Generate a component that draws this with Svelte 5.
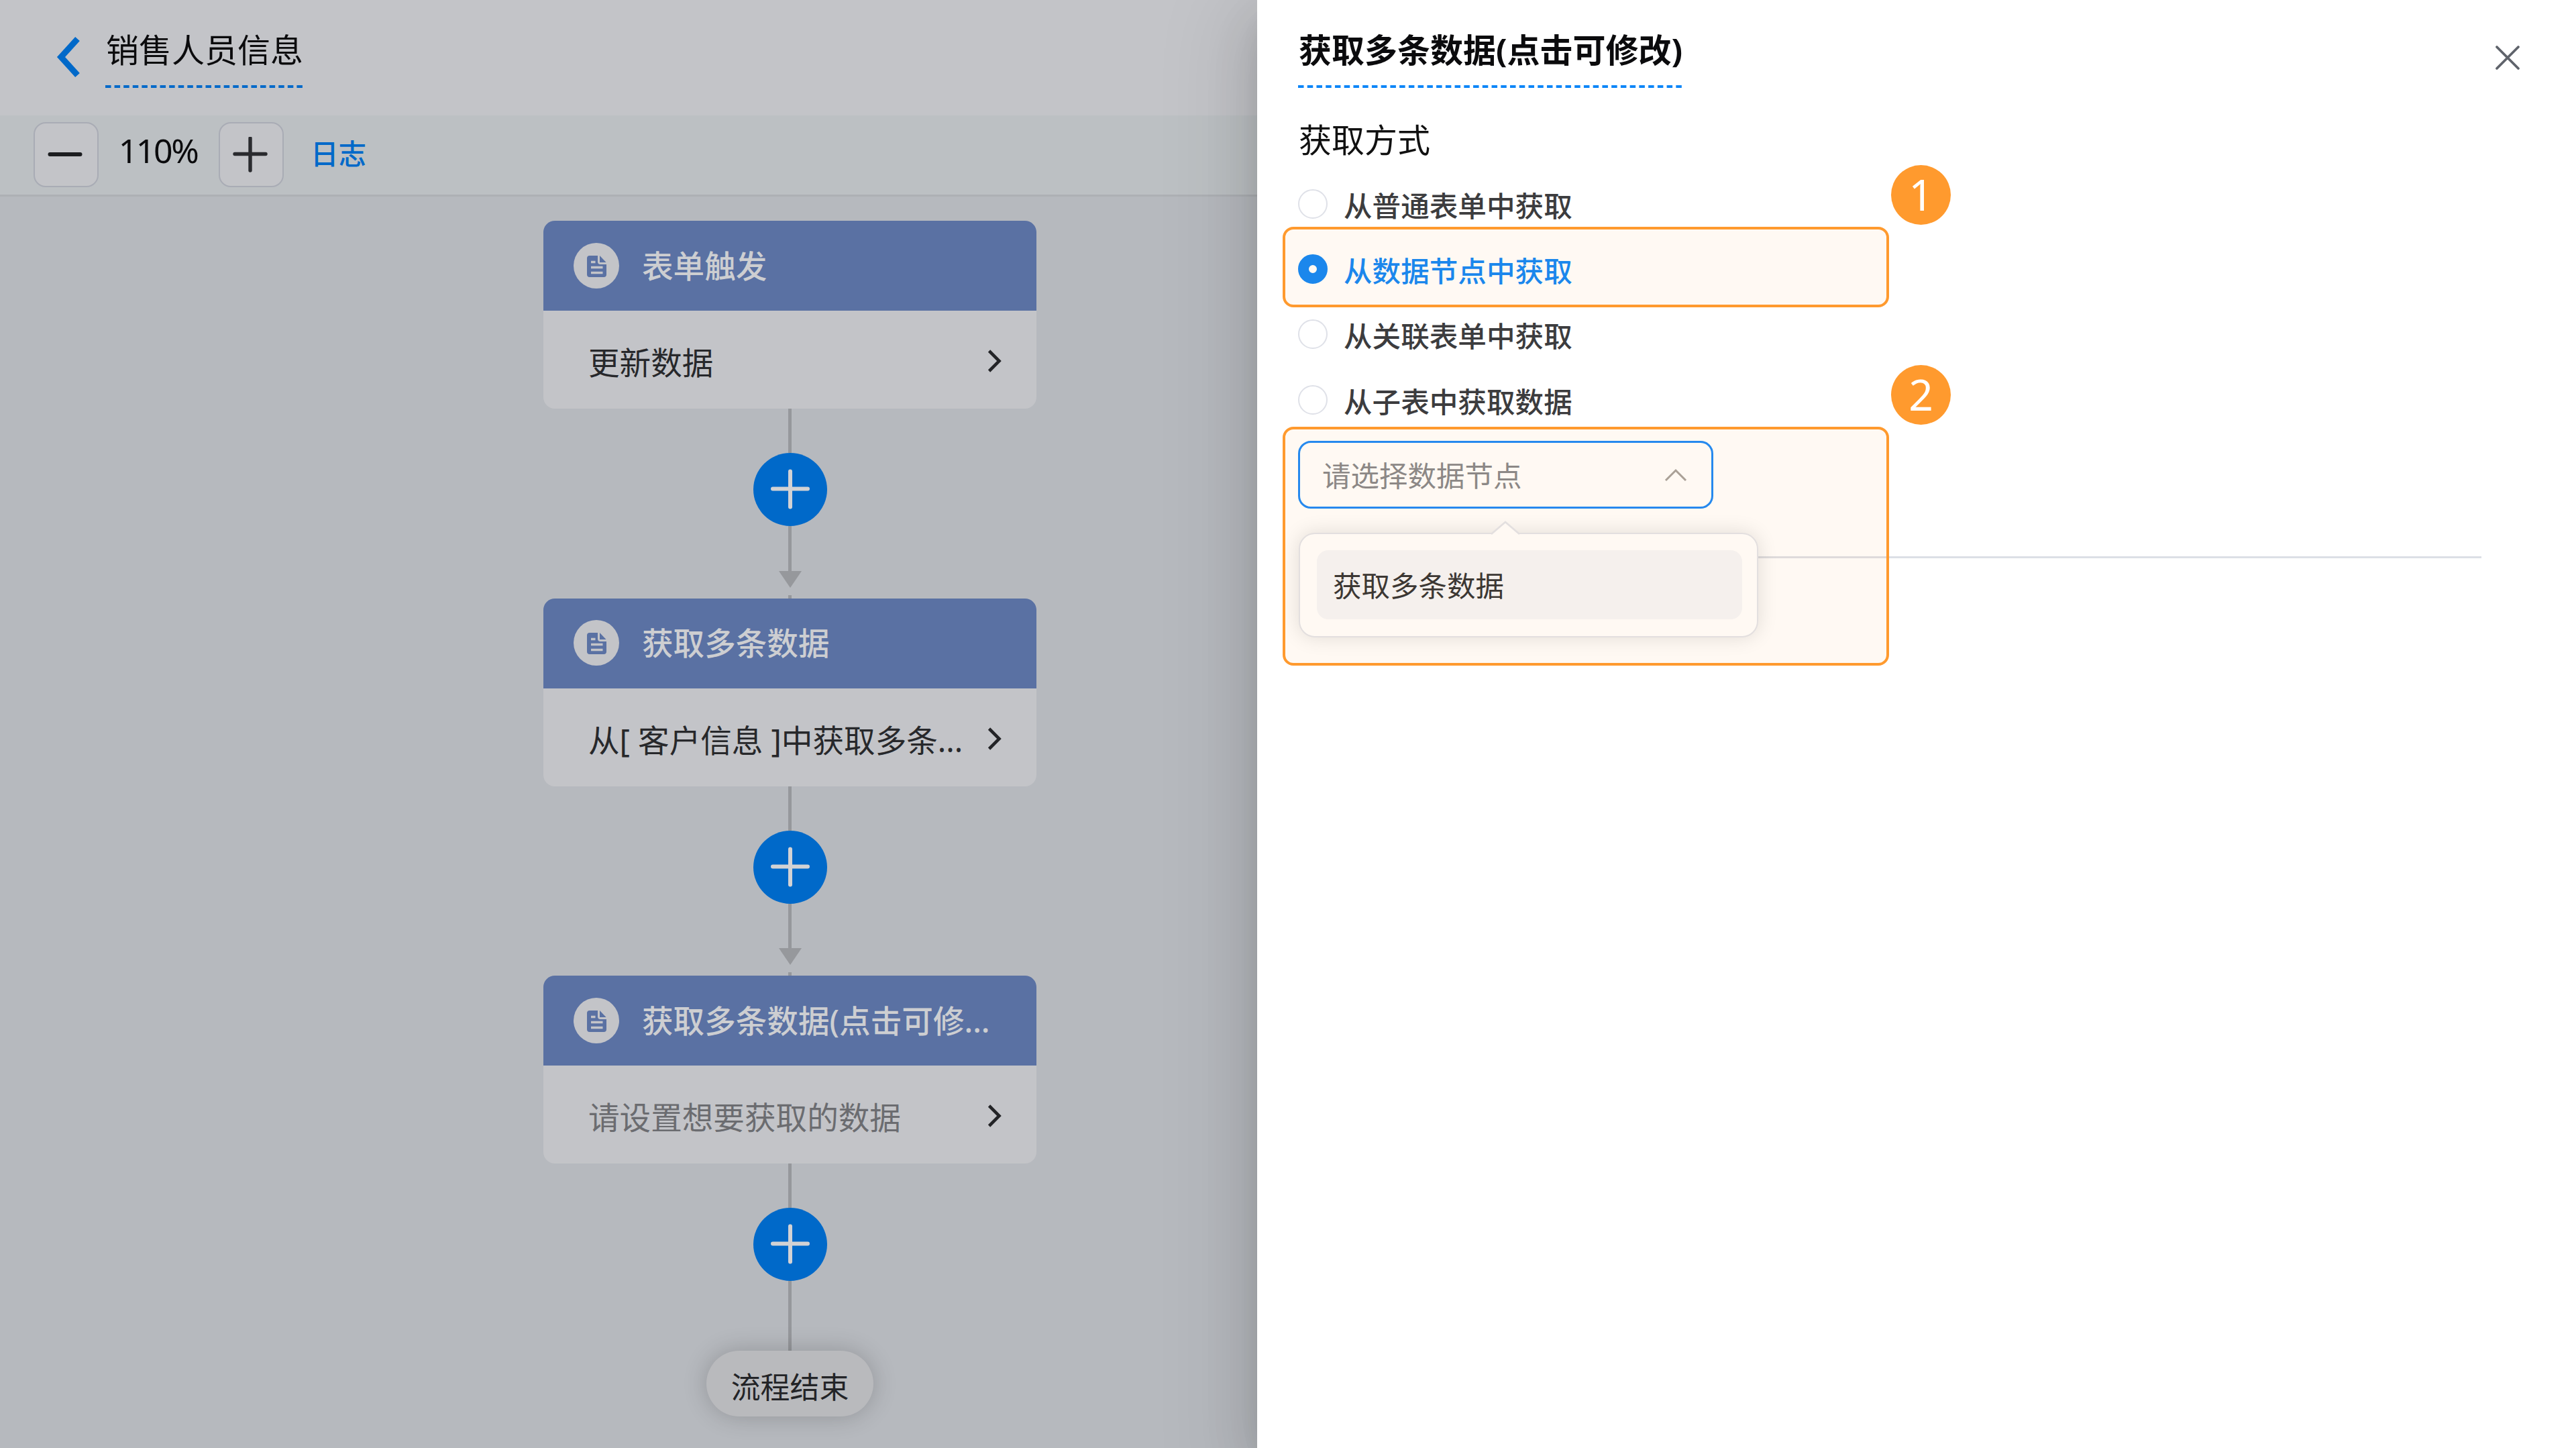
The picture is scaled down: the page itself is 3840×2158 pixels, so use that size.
<script>
  const nodes = [
    { title: '表单触发', body: '更新数据' },
    { title: '获取多条数据', body: '从[ 客户信息 ]中获取多条...' },
    { title: '获取多条数据(点击可修...', body: '请设置想要获取的数据', empty: true },
  ];

  const modes = ['从普通表单中获取', '从数据节点中获取', '从关联表单中获取', '从子表中获取数据'];

  let selected = $state(1);
  let zoom = $state(110);
</script>

<div class="page">
  <main class="flow">
    <header class="topbar">
      <svg class="back" viewBox="0 0 38 62">
        <path d="M31.5 4 L7 31 L31.5 58" fill="none" stroke="#0069c9" stroke-width="9" />
      </svg>
      <div class="name">
        <span>销售人员信息</span>
        <svg class="dashes" width="294" height="4">
          <line x1="0" y1="2" x2="294" y2="2" stroke="#0069c9" stroke-width="4" stroke-dasharray="8.5 5.09" />
        </svg>
      </div>
    </header>

    <div class="toolbar">
      <button class="zoom-btn" aria-label="缩小" onclick={() => (zoom -= 10)}>
        <svg width="54" height="54"><path d="M4.5 26 H49.5" stroke="#1c1d20" stroke-width="6" stroke-linecap="round" /></svg>
      </button>
      <span class="percent">{zoom}%</span>
      <button class="zoom-btn" aria-label="放大" onclick={() => (zoom += 10)}>
        <svg width="54" height="54"><path d="M4 25.5 H50 M27 2 V50" stroke="#2a2b2f" stroke-width="5.4" stroke-linecap="round" /></svg>
      </button>
      <span class="log">日志</span>
    </div>

    <div class="canvas">
      {#each nodes as node, i}
        <div class="node">
          <div class="node-head">
            <svg class="doc" viewBox="0 0 68 68">
              <circle cx="34" cy="34" r="34" fill="#c3c4c8" />
              <path d="M24 19 H36 V28 Q36 32 40 32 H49 V47 Q49 51 45 51 H24 Q20 51 20 47 V23 Q20 19 24 19 Z" fill="#5a71a3" />
              <path d="M39 19 L48.5 29 H39 Z" fill="#5a71a3" />
              <path d="M26 28.5 H32.5 M26 36.5 H43.5 M26 44.5 H43.5" stroke="#c3c4c8" stroke-width="3.6" />
            </svg>
            <span>{node.title}</span>
          </div>
          <div class="node-body" class:empty={node.empty}>
            <span>{node.body}</span>
            <svg class="arrow-right" width="24" height="38">
              <path d="M3.5 4 L18.5 19 L3.5 34" fill="none" stroke="#232427" stroke-width="4.6" />
            </svg>
          </div>
        </div>
        <div class="link" class:last={i === nodes.length - 1}>
          <i class="line top"></i>
          <button class="add" aria-label="添加节点">
            <svg width="64" height="64"><path d="M6 31.5 H58 M32 5.5 V58.5" stroke="#d2d2d4" stroke-width="6" stroke-linecap="round" /></svg>
          </button>
          <i class="line"></i>
          {#if i < nodes.length - 1}
            <i class="head"></i>
            <i class="line stub"></i>
          {/if}
        </div>
      {/each}
      <div class="end">流程结束</div>
    </div>
  </main>

  <aside class="drawer">
    <div class="drawer-head">
      <div class="name bold">
        <span>获取多条数据(点击可修改)</span>
        <svg class="dashes" width="572" height="4">
          <line x1="0" y1="2" x2="572" y2="2" stroke="#0d86f8" stroke-width="4" stroke-dasharray="8.5 5.24" />
        </svg>
      </div>
      <svg class="close" width="40" height="40">
        <path d="M4 4 L36 36 M36 4 L4 36" stroke="#5f636b" stroke-width="3.8" stroke-linecap="round" />
      </svg>
    </div>

    <h3>获取方式</h3>

    <div class="radios">
      {#each modes as mode, i}
        <label class="radio" class:checked={i === selected}>
          <input type="radio" name="mode" value={i} bind:group={selected} />
          <i class="dot"></i>
          <span>{mode}</span>
        </label>
      {/each}
    </div>

    <div class="select">
      <span>请选择数据节点</span>
      <svg width="36" height="24">
        <path d="M3 20 L18 5 L33 20" fill="none" stroke="#a5a19d" stroke-width="3" />
      </svg>
    </div>

    <hr />

    <div class="popper">
      <svg class="tip" width="44" height="22">
        <path d="M1 20 L22 2 L43 20 V22 H1 Z" fill="#fff" />
        <path d="M1 20 L22 2 L43 20" fill="none" stroke="#e2e4ea" stroke-width="2.5" />
      </svg>
      <div class="option">获取多条数据</div>
    </div>

    <div class="mark one"><b>1</b></div>
    <div class="mark two"><b>2</b></div>
  </aside>
</div>

<style>
  :global(body) {
    margin: 0;
  }

  .page {
    display: flex;
    width: 3840px;
    height: 2158px;
    overflow: hidden;
    font-family: 'Noto Sans', 'Noto Sans CJK SC', sans-serif;
    background: #b6b9be;
  }

  .page *, .page {
    box-sizing: border-box;
  }

  button {
    padding: 0;
    border: none;
    font: inherit;
  }

  svg {
    display: block;
    flex: none;
  }

  /* left side */
  .flow {
    width: 1874px;
    flex: none;
    display: flex;
    flex-direction: column;
  }

  .topbar {
    height: 172px;
    display: flex;
    align-items: flex-start;
    padding: 54px 0 0 84px;
    background: #c3c4c8;
  }

  .back {
    width: 38px;
    height: 62px;
    margin-right: 35px;
  }

  .name {
    height: 77px;
    display: flex;
    flex-direction: column;
    justify-content: space-between;
    font-size: 49px;
    line-height: 49px;
    color: #0b0b0d;
    white-space: nowrap;
  }

  .name span {
    margin: -4px 0 0 1px;
  }

  .toolbar {
    height: 121px;
    display: flex;
    align-items: center;
    padding: 0 0 1px 50px;
    background: #bcc0c3;
    border-bottom: 3px solid #adb0b4;
  }

  .zoom-btn {
    width: 97px;
    height: 97px;
    display: flex;
    align-items: center;
    justify-content: center;
    padding-right: 3px;
    background: #c3c4c8;
    border: 2px solid #a9acb5;
    border-radius: 18px;
  }

  .percent {
    width: 179px;
    text-align: center;
    font-size: 50px;
    line-height: 50px;
    letter-spacing: -2.4px;
    margin-top: -14px;
    padding-right: 2px;
    color: #0b0b0d;
  }

  .log {
    margin-left: 40px;
    font-size: 41.5px;
    line-height: 42px;
    margin-top: -4px;
    font-weight: 500;
    color: #0069c9;
  }

  .canvas {
    flex: 1;
    width: 735px;
    margin-left: 810px;
    padding-top: 36px;
    display: flex;
    flex-direction: column;
    align-items: center;
  }

  .node {
    width: 735px;
    height: 280px;
    flex: none;
    border-radius: 17px;
    overflow: hidden;
    background: #c3c4c8;
  }

  .node-head {
    height: 134px;
    display: flex;
    align-items: center;
    padding: 0 0 1px 45px;
    background: #5a71a3;
    color: #cdced1;
    font-size: 46.6px;
    font-weight: 500;
    white-space: nowrap;
  }

  .node-head span {
    margin-top: -4px;
  }

  .doc {
    width: 68px;
    height: 68px;
    margin-right: 34px;
  }

  .node-body {
    height: 146px;
    display: flex;
    align-items: center;
    justify-content: space-between;
    padding: 4px 50px 0 67px;
    font-size: 46.6px;
    color: #27282b;
    white-space: nowrap;
  }

  .node-body.empty {
    color: #6b6c70;
  }

  .link {
    height: 282.5px;
    flex: none;
    display: flex;
    flex-direction: column;
    align-items: center;
  }

  .link.last {
    height: 279px;
  }

  .line {
    width: 5px;
    flex: 1;
    background: #96989c;
  }

  .line.top {
    flex: 0 0 66px;
  }

  .add {
    width: 110px;
    height: 109px;
    flex: none;
    display: flex;
    align-items: center;
    justify-content: center;
    padding-bottom: 1px;
    border-radius: 50%;
    background: #0069c9;
  }

  .head {
    border: 17px solid transparent;
    border-top: 25px solid #96989c;
    border-bottom: none;
    margin-bottom: 11px;
  }

  .line.stub {
    flex: 0 0 5px;
  }

  .end {
    width: 249px;
    height: 98px;
    flex: none;
    line-height: 98px;
    padding-top: 5px;
    text-align: center;
    font-size: 43.9px;
    color: #232427;
    background: #b9babd;
    border-radius: 49px;
    box-shadow: 0 0 36px rgba(0, 0, 0, 0.2);
  }

  /* right side */
  .drawer {
    position: relative;
    flex: 1;
    background: #fff;
    padding: 54px 0 0 61px;
    box-shadow:
      0 39px 118px 39px rgba(0, 0, 0, 0.08),
      0 29px 78px rgba(0, 0, 0, 0.12),
      0 20px 39px -20px rgba(0, 0, 0, 0.16);
  }

  .drawer-head {
    display: flex;
    justify-content: space-between;
    align-items: flex-start;
    padding-right: 82px;
  }

  .bold {
    font-weight: 700;
  }

  .close {
    margin-top: 12px;
  }

  h3 {
    margin: 51px 0 0 1px;
    font-size: 49px;
    line-height: 52px;
    font-weight: 400;
    color: #111;
  }

  .radios {
    margin-top: 21px;
  }

  .radio {
    height: 97.3px;
    display: flex;
    align-items: center;
    font-size: 42.6px;
    line-height: 60px;
    font-weight: 500;
    color: #3c3c3e;
  }

  .radio span {
    padding-top: 4px;
  }

  .radio input {
    display: none;
  }

  .dot {
    width: 44px;
    height: 44px;
    margin-right: 24px;
    border: 2.5px solid #dfe1e8;
    border-radius: 50%;
    background: #fff;
  }

  .checked {
    color: #0d86f8;
  }

  .checked .dot {
    border: 16px solid #0d86f8;
  }

  .select {
    width: 619px;
    height: 101px;
    margin-top: 13px;
    display: flex;
    align-items: center;
    justify-content: space-between;
    padding: 0 35px 0 33px;
    border: 3.5px solid #1989fa;
    border-radius: 19px;
    font-size: 42.5px;
    color: #85878c;
  }

  .select span {
    margin-top: -2px;
  }

  hr {
    margin: 71px 141px 0 4px;
    border: none;
    height: 3px;
    background: #dcdfe6;
  }

  .popper {
    position: absolute;
    left: 62px;
    top: 794px;
    width: 685px;
    height: 156px;
    padding: 24px 22px 0 25px;
    background: #fff;
    border: 2.5px solid #e2e4ea;
    border-radius: 24px;
    box-shadow: 0 0 30px rgba(0, 0, 0, 0.12);
  }

  .tip {
    position: absolute;
    left: 284px;
    top: -20px;
  }

  .option {
    height: 103px;
    line-height: 105px;
    padding-left: 24px;
    border-radius: 17px;
    background: #f5f6f9;
    font-size: 42.5px;
    color: #303133;
  }

  /* numbered highlights over the form */
  .mark {
    position: absolute;
    left: 38px;
    width: 904px;
    border: 4px solid #ff9a2e;
    border-radius: 16px;
    background: rgba(255, 154, 46, 0.06);
  }

  .mark.one {
    top: 338px;
    height: 120px;
  }

  .mark.two {
    top: 636px;
    height: 356px;
  }

  .mark b {
    position: absolute;
    right: -96px;
    top: -96px;
    width: 89px;
    height: 89px;
    line-height: 88px;
    border-radius: 50%;
    background: #ff9a2e;
    color: #fff;
    font-size: 64px;
    font-weight: 400;
    text-align: center;
  }
</style>
